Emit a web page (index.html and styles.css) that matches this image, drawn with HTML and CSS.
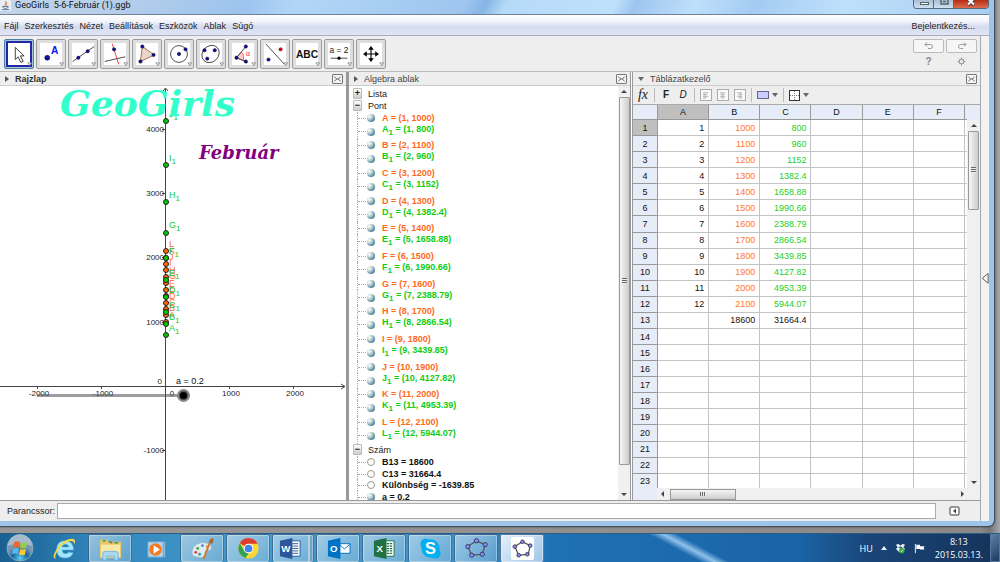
FILE: index.html
```html
<!DOCTYPE html>
<html lang="hu">
<head>
<meta charset="utf-8">
<title>GeoGirls 5-6-Február (1).ggb</title>
<link rel="stylesheet" href="styles.css">
</head>
<body>
<div class="desktop">
<div class="window">
  <header class="titlebar">
    <svg class="java" viewBox="0 0 12 12"><rect width="12" height="12" rx="1" fill="#e9eef5"/><path d="M6 1c2 2-2 3 0 5M8 3c-1 1-1 2-1 3" stroke="#e0662a" fill="none"/><path d="M3 7h6c0 3-6 3-6 0M2 10.500h8" stroke="#4a6c95" fill="none"/></svg>
    <span class="caption">GeoGirls&nbsp; 5-6-Február (1).ggb</span>
    <div class="winbtns">
      <button aria-label="Kis méret"><svg viewBox="0 0 20 9"><rect x="6.500" y="2.500" width="8" height="2" fill="#fff" stroke="#566"/></svg></button>
      <button aria-label="Előző méret"><svg viewBox="0 0 20 9"><path d="M7 -1v5h7v-5M9 1.500h3" stroke="#566" stroke-width="1.500" fill="none"/></svg></button>
      <button class="close" aria-label="Bezárás"><svg viewBox="0 0 20 9"><path d="M7 5l6-6M13 5L7-1" stroke="#533" stroke-width="3.500"/><path d="M7 4.500l6-6M13 4.500L7-1" stroke="#fff" stroke-width="2"/></svg></button>
    </div>
  </header>
  <nav class="menubar">
    <button>Fájl</button><button>Szerkesztés</button><button>Nézet</button><button>Beállítások</button><button>Eszközök</button><button>Ablak</button><button>Súgó</button>
    <button class="login">Bejelentkezés...</button>
  </nav>
  <div class="body">
    <main class="main">
      <div class="toolbar">
        <button class="tool active" aria-label="Mozgatás"><svg viewBox="0 0 30 30"><path d="M11 8v13l3-3 3 6 2.500-1-3-6h4z" fill="#fff" stroke="#333"/><path class="dd" d="M24.500 24.500h4l-2 3z"/></svg></button>
        <button class="tool" aria-label="Pont"><svg viewBox="0 0 30 30"><circle cx="11" cy="19" r="2.700" class="pt"/><text x="15" y="15" class="ia">A</text><path class="dd" d="M24.500 24.500h4l-2 3z"/></svg></button>
        <button class="tool" aria-label="Egyenes"><svg viewBox="0 0 30 30"><path d="M4 23L27 7" class="ln"/><circle cx="10" cy="19" r="1.800" class="pt"/><circle cx="20" cy="12" r="1.800" class="pt"/><path class="dd" d="M24.500 24.500h4l-2 3z"/></svg></button>
        <button class="tool" aria-label="Merőleges"><svg viewBox="0 0 30 30"><path d="M12 4l7 22" stroke="#f33"/><path d="M4 23l22-5" class="ln"/><circle cx="14" cy="10" r="1.800" class="pt"/><path class="dd" d="M24.500 24.500h4l-2 3z"/></svg></button>
        <button class="tool" aria-label="Sokszög"><svg viewBox="0 0 30 30"><path d="M10 7l13 9-15 7z" fill="#ead5c8" stroke="#a5674a"/><circle cx="10" cy="7" r="1.800" class="pt"/><circle cx="22" cy="16" r="1.800" class="pt"/><circle cx="8" cy="23" r="1.800" class="pt"/><path class="dd" d="M24.500 24.500h4l-2 3z"/></svg></button>
        <button class="tool" aria-label="Kör"><svg viewBox="0 0 30 30"><circle cx="15" cy="15" r="9" class="ln"/><circle cx="15" cy="15" r="1.800" class="pt"/><circle cx="22" cy="10" r="1.800" class="pt"/><path class="dd" d="M24.500 24.500h4l-2 3z"/></svg></button>
        <button class="tool" aria-label="Kúpszelet"><svg viewBox="0 0 30 30"><ellipse cx="14.500" cy="15" rx="10" ry="8.500" transform="rotate(-45 14.500 15)" class="ln"/><circle cx="8" cy="11" r="1.800" class="pt"/><circle cx="19" cy="11" r="1.800" class="pt"/><circle cx="11" cy="20" r="1.800" class="pt"/><path class="dd" d="M24.500 24.500h4l-2 3z"/></svg></button>
        <button class="tool" aria-label="Szög"><svg viewBox="0 0 30 30"><path d="M8 19l5-6c3 2 3 5 2 9z" fill="#fcc" stroke="#e55"/><path d="M18 7L8 19l12 5" class="ln"/><text x="18" y="17" class="ir">α</text><circle cx="18" cy="7" r="1.800" class="pt"/><circle cx="8" cy="19" r="1.800" class="pt"/><circle cx="18" cy="23" r="1.800" class="pt"/><path class="dd" d="M24.500 24.500h4l-2 3z"/></svg></button>
        <button class="tool" aria-label="Tükrözés"><svg viewBox="0 0 30 30"><path d="M5 4l20 22" class="ln"/><circle cx="8" cy="21" r="1.800" class="pt"/><circle cx="21" cy="10" r="1.800" fill="#d11" stroke="#400" stroke-width=".5"/><path class="dd" d="M24.500 24.500h4l-2 3z"/></svg></button>
        <button class="tool" aria-label="Szöveg"><svg viewBox="0 0 30 30"><text x="15" y="19" class="iabc">ABC</text><path class="dd" d="M24.500 24.500h4l-2 3z"/></svg></button>
        <button class="tool" aria-label="Csúszka"><svg viewBox="0 0 30 30"><text x="15" y="14" class="ieq">a = 2</text><path d="M6 19.500h18" class="ln"/><circle cx="15" cy="19.500" r="1.700" fill="#000"/><path class="dd" d="M24.500 24.500h4l-2 3z"/></svg></button>
        <button class="tool" aria-label="Rajzlap mozgatása"><svg viewBox="0 0 30 30"><path d="M15 9v12M9 15h12" stroke="#000" stroke-width="1.200"/><path fill="#000" d="M15 6.500l-3 4h6zM15 23.500l-3-4h6zM6.500 15l4-3v6zM23.500 15l-4-3v6z"/><path class="dd" d="M24.500 24.500h4l-2 3z"/></svg></button>
        <div class="history">
          <button class="undo" aria-label="Visszavonás"><svg viewBox="0 0 12 8"><path d="M4 .5L2 2.500l2 2M2 2.500h5.500q2 0 2 2t-2 2H5"/></svg></button>
          <button class="undo" aria-label="Újra"><svg viewBox="0 0 12 8"><path d="M8 .5l2 2-2 2M10 2.500H4.500q-2 0-2 2t2 2H7"/></svg></button>
          <button class="plain">?</button>
          <button class="plain" aria-label="Beállítások"><svg viewBox="0 0 10 10" class="gear"><circle cx="5" cy="5" r="2.500"/><path d="M5 .5v2M5 7.500v2M.5 5h2M7.500 5h2M2 2l1 1M7 7l1 1M8 2L7 3M3 7L2 8"/></svg></button>
        </div>
      </div>
      <div class="panels">
        <section class="panel graph">
          <h2 class="phead strong"><span class="tri"></span>Rajzlap<button class="px" aria-label="Bezárás"><svg viewBox="0 0 10 10"><path d="M1 2l3 3-3 3M9 2L6 5l3 3M4 5h2"/></svg></button></h2>
          <div class="canvas">
            <svg class="plot">
              <g class="axis">
                <path d="M0 300.500h345M165.500 3v420M341 298l4 2.500-4 2.500M163 5l2.500-3 2.500 3"/>
                <path d="M162 43.500h4M162 107.500h4M162 171.500h4M162 236.500h4M162 364.500h4M37.500 300v3M101.500 300v3M229.500 300v3M293.500 300v3"/>
              </g>
              <g class="num end"><text x="164" y="46">4000</text><text x="164" y="110">3000</text><text x="164" y="174">2000</text><text x="164" y="239">1000</text><text x="164" y="367">-1000</text><text x="162" y="298">0</text></g>
              <g class="num mid"><text x="39" y="310">-2000</text><text x="103" y="310">-1000</text><text x="172" y="310">0</text><text x="231" y="310">1000</text><text x="295" y="310">2000</text></g>
              <text x="176" y="298" class="lab">a = 0.2</text>
              <g class="orange">
                <circle cx="166" cy="236" r="2.500"/><circle cx="166" cy="229" r="2.500"/><circle cx="166" cy="223" r="2.500"/><circle cx="166" cy="217" r="2.500"/><circle cx="166" cy="210" r="2.500"/><circle cx="166" cy="204" r="2.500"/><circle cx="166" cy="197" r="2.500"/><circle cx="166" cy="191" r="2.500"/><circle cx="166" cy="184" r="2.500"/><circle cx="166" cy="178" r="2.500"/><circle cx="166" cy="172" r="2.500"/><circle cx="166" cy="165" r="2.500"/>
                <text x="169" y="232">A</text><text x="169" y="225">B</text><text x="169" y="219">C</text><text x="169" y="213">D</text><text x="169" y="206">E</text><text x="169" y="200">F</text><text x="169" y="193">G</text><text x="169" y="187">H</text><text x="169" y="180">I</text><text x="169" y="174">J</text><text x="169" y="168">K</text><text x="169" y="161">L</text>
              </g>
              <g class="green">
                <circle cx="166" cy="249" r="2.500"/><circle cx="166" cy="238" r="2.500"/><circle cx="166" cy="226" r="2.500"/><circle cx="166" cy="211" r="2.500"/><circle cx="166" cy="194" r="2.500"/><circle cx="166" cy="172" r="2.500"/><circle cx="166" cy="147" r="2.500"/><circle cx="166" cy="116" r="2.500"/><circle cx="166" cy="79" r="2.500"/><circle cx="166" cy="35" r="2.500"/>
                <text x="169" y="245">A<tspan dy="3">1</tspan></text><text x="169" y="234">B<tspan dy="3">1</tspan></text><text x="169" y="222">C<tspan dy="3">1</tspan></text><text x="169" y="207">D<tspan dy="3">1</tspan></text><text x="169" y="190">E<tspan dy="3">1</tspan></text><text x="169" y="168">F<tspan dy="3">1</tspan></text><text x="169" y="142">G<tspan dy="3">1</tspan></text><text x="169" y="112">H<tspan dy="3">1</tspan></text><text x="169" y="75">I<tspan dy="3">1</tspan></text><text x="169" y="31">J<tspan dy="3">1</tspan></text>
              </g>
              <text x="60" y="30" class="big">GeoGirls</text>
              <text x="199" y="73" class="feb">Február</text>
            </svg>
            <input class="slider" type="range" min="0" max="0.2" step="0.01" value="0.2" aria-label="a">
          </div>
        </section>
        <section class="panel algebra">
          <h2 class="phead"><span class="tri"></span>Algebra ablak<button class="px" aria-label="Bezárás"><svg viewBox="0 0 10 10"><path d="M1 2l3 3-3 3M9 2L6 5l3 3M4 5h2"/></svg></button></h2>
          <div class="scrollrow">
            <ul class="tree">
              <li class="cat"><button class="ex">+</button>Lista</li>
              <li class="cat"><button class="ex">−</button>Pont</li>
              <li class="o">A = (1, 1000)</li><li class="g">A<sub>1</sub> = (1, 800)</li>
              <li class="o">B = (2, 1100)</li><li class="g">B<sub>1</sub> = (2, 960)</li>
              <li class="o">C = (3, 1200)</li><li class="g">C<sub>1</sub> = (3, 1152)</li>
              <li class="o">D = (4, 1300)</li><li class="g">D<sub>1</sub> = (4, 1382.4)</li>
              <li class="o">E = (5, 1400)</li><li class="g">E<sub>1</sub> = (5, 1658.88)</li>
              <li class="o">F = (6, 1500)</li><li class="g">F<sub>1</sub> = (6, 1990.66)</li>
              <li class="o">G = (7, 1600)</li><li class="g">G<sub>1</sub> = (7, 2388.79)</li>
              <li class="o">H = (8, 1700)</li><li class="g">H<sub>1</sub> = (8, 2866.54)</li>
              <li class="o">I = (9, 1800)</li><li class="g">I<sub>1</sub> = (9, 3439.85)</li>
              <li class="o">J = (10, 1900)</li><li class="g">J<sub>1</sub> = (10, 4127.82)</li>
              <li class="o">K = (11, 2000)</li><li class="g">K<sub>1</sub> = (11, 4953.39)</li>
              <li class="o">L = (12, 2100)</li><li class="g end">L<sub>1</sub> = (12, 5944.07)</li>
              <li class="cat"><button class="ex">−</button>Szám</li>
              <li class="n hollow">B13 = 18600</li><li class="n hollow">C13 = 31664.4</li><li class="n hollow">Különbség = -1639.85</li><li class="n last">a = 0.2</li>
            </ul>
            <div class="vbar"><span class="up"></span><span class="thumb long"></span><span class="space"></span><span class="down"></span></div>
          </div>
        </section>
        <section class="panel sheet">
          <h2 class="phead"><span class="tri open"></span>Táblázatkezelő<button class="px" aria-label="Bezárás"><svg viewBox="0 0 10 10"><path d="M1 2l3 3-3 3M9 2L6 5l3 3M4 5h2"/></svg></button></h2>
          <div class="format">
            <button class="fx">fx</button><i class="sep"></i>
            <button class="fb">F</button><button class="fi">D</button><i class="sep"></i>
            <button class="al" aria-label="Balra"><svg viewBox="0 0 11 12"><path d="M2 3.500h6M2 5.500h4M2 7.500h6M2 9.500h4"/></svg></button>
            <button class="al" aria-label="Középre"><svg viewBox="0 0 11 12"><path d="M2 3.500h6M3 5.500h4M2 7.500h6M3 9.500h4"/></svg></button>
            <button class="al" aria-label="Jobbra"><svg viewBox="0 0 11 12"><path d="M2 3.500h6M4 5.500h4M2 7.500h6M4 9.500h4"/></svg></button><i class="sep"></i>
            <button class="drop" aria-label="Háttérszín"><span class="swatch"></span><span class="tri open"></span></button><i class="sep"></i>
            <button class="drop" aria-label="Szegély"><svg viewBox="0 0 11 11"><rect x=".5" y=".5" width="10" height="10" fill="#fff" stroke="#333"/><path d="M5.500 1v9M1 5.500h9" stroke="#777" stroke-dasharray="1 1"/></svg><span class="tri open"></span></button>
          </div>
          <div class="gridrow">
            <div class="tablebox">
            <table>
              <colgroup><col class="c0"><col><col><col><col><col><col><col class="cx"></colgroup>
              <tr class="hd"><th></th><th class="sel">A</th><th>B</th><th>C</th><th>D</th><th>E</th><th>F</th><th></th></tr>
              <tr><th class="sel">1</th><td>1</td><td>1000</td><td>800</td><td></td><td></td><td></td><td></td></tr>
              <tr><th>2</th><td>2</td><td>1100</td><td>960</td><td></td><td></td><td></td><td></td></tr>
              <tr><th>3</th><td>3</td><td>1200</td><td>1152</td><td></td><td></td><td></td><td></td></tr>
              <tr><th>4</th><td>4</td><td>1300</td><td>1382.4</td><td></td><td></td><td></td><td></td></tr>
              <tr><th>5</th><td>5</td><td>1400</td><td>1658.88</td><td></td><td></td><td></td><td></td></tr>
              <tr><th>6</th><td>6</td><td>1500</td><td>1990.66</td><td></td><td></td><td></td><td></td></tr>
              <tr><th>7</th><td>7</td><td>1600</td><td>2388.79</td><td></td><td></td><td></td><td></td></tr>
              <tr><th>8</th><td>8</td><td>1700</td><td>2866.54</td><td></td><td></td><td></td><td></td></tr>
              <tr><th>9</th><td>9</td><td>1800</td><td>3439.85</td><td></td><td></td><td></td><td></td></tr>
              <tr><th>10</th><td>10</td><td>1900</td><td>4127.82</td><td></td><td></td><td></td><td></td></tr>
              <tr><th>11</th><td>11</td><td>2000</td><td>4953.39</td><td></td><td></td><td></td><td></td></tr>
              <tr><th>12</th><td>12</td><td>2100</td><td>5944.07</td><td></td><td></td><td></td><td></td></tr>
              <tr class="sum"><th>13</th><td></td><td>18600</td><td>31664.4</td><td></td><td></td><td></td><td></td></tr>
              <tr><th>14</th><td></td><td></td><td></td><td></td><td></td><td></td><td></td></tr>
              <tr><th>15</th><td></td><td></td><td></td><td></td><td></td><td></td><td></td></tr>
              <tr><th>16</th><td></td><td></td><td></td><td></td><td></td><td></td><td></td></tr>
              <tr><th>17</th><td></td><td></td><td></td><td></td><td></td><td></td><td></td></tr>
              <tr><th>18</th><td></td><td></td><td></td><td></td><td></td><td></td><td></td></tr>
              <tr><th>19</th><td></td><td></td><td></td><td></td><td></td><td></td><td></td></tr>
              <tr><th>20</th><td></td><td></td><td></td><td></td><td></td><td></td><td></td></tr>
              <tr><th>21</th><td></td><td></td><td></td><td></td><td></td><td></td><td></td></tr>
              <tr><th>22</th><td></td><td></td><td></td><td></td><td></td><td></td><td></td></tr>
              <tr><th>23</th><td></td><td></td><td></td><td></td><td></td><td></td><td></td></tr>
            </table>
            </div>
            <div class="sidecol"><div class="corner"></div><div class="vbar"><span class="up"></span><span class="thumb short"></span><span class="space"></span><span class="down"></span></div></div>
          </div>
          <div class="hbar"><span class="left"></span><span class="hthumb"></span><span class="space"></span><span class="right"></span></div>
        </section>
      </div>
      <div class="inputbar">
        <label for="cmd">Parancssor:</label><input id="cmd" type="text">
        <button class="help" aria-label="Súgó"><svg viewBox="0 0 11 10"><rect x="1" y="1" width="9" height="8" rx="1.500" fill="#fff" stroke="#777" stroke-width="1.500"/><path d="M7 2.500v5L4 5z" fill="#444"/></svg></button>
      </div>
    </main>
    <aside class="strip"><svg viewBox="0 0 9 12"><path d="M8 .5v11L1.500 6z" fill="#fff" stroke="#444"/></svg></aside>
  </div>
</div>
</div>
<footer class="taskbar">
  <button class="task orb" aria-label="Start"><svg viewBox="0 0 28 28"><defs><radialGradient id="ob" cy=".9"><stop offset="0" stop-color="#5ad0ee"/><stop offset=".6" stop-color="#1b669f"/><stop offset="1" stop-color="#7698b3"/></radialGradient></defs><circle cx="14" cy="14" r="13" fill="url(#ob)" stroke="#8ab"/><path d="M2 12a12 12 0 0 1 24 0q-12-5-24 0" fill="#c4d2dd" opacity=".6"/><path d="M8 8.500q3-2 6-.5l-1 5.500q-3-1-6 .5z" fill="#f0652a"/><path d="M15 8.500q3 1 6-.5l-1 6q-3 1-6 0z" fill="#9ccc3c"/><path d="M7 15q3-1.500 6-.5l-1 5.500q-3-1-6 .5z" fill="#5bb8f0"/><path d="M14 15q3 1 6 0l-1 5.500q-3 1.500-6 0z" fill="#fdc82f"/></svg></button>
  <button class="task bare" aria-label="Internet Explorer"><svg viewBox="0 0 26 26"><path d="M22 17.500q-2 5.500-8.500 5.500-8.500 0-8.500-9t8.500-9 9 9.500H10.500q.3 4 3.500 4 2.200 0 3-1.500zM10.500 11.500h7q-.3-3-3.500-3t-3.500 3" fill="#a5e4fb" stroke="#4abbe8" stroke-width=".6"/><path d="M4 24q-4-1-1.500-6Q7 7 17 3.500q7-2 7 2 0 1-1 3 0-4-5-3Q8 9 4.500 18q-2 4-.5 6" fill="#f8d640"/></svg></button>
  <button class="task" aria-label="Intéző"><svg viewBox="0 0 26 26"><path d="M2 5q0-1 1-1h7l1 2h13v17H2z" fill="#e5c768"/><path d="M3 9h20v13H3z" fill="#f9e9a6"/><path d="M5 5h3M11 6h3M17 7h4" stroke="#3aa25a" stroke-width="1.500"/><path d="M13 7h2" stroke="#d44" stroke-width="1.500"/><path d="M5 25v-7q0-2 2-2h12q2 0 2 2v7h-4v-4H9v4z" fill="#abd9f2" stroke="#72b5dd"/></svg></button>
  <button class="task bare" aria-label="Médialejátszó"><svg viewBox="0 0 26 26"><path d="M8 6h14v16H8z" fill="#8ebde0"/><path d="M4 6h16v16H4z" fill="#b0d5ec" stroke="#669fce"/><circle cx="12" cy="14" r="6.500" fill="#f47920"/><path d="M10 9.500v9l6.500-4.500z" fill="#fff"/></svg></button>
  <button class="task" aria-label="Paint"><svg viewBox="0 0 26 26"><path d="M2 17C2 10 9 6 16 7c7 1 8 7 4 8-3 0-5 1-4 3 1 4-4 5-8 4-4 0-6-2-6-5" fill="#dfeaf2" stroke="#9bb6c8"/><circle cx="6" cy="17" r="1.500" fill="#d44"/><circle cx="8" cy="13" r="1.500" fill="#4a4"/><circle cx="13" cy="10" r="1.500" fill="#48d"/><circle cx="10" cy="19" r="1.500" fill="#2a9"/><circle cx="18" cy="11" r="1.500" fill="#e92"/><path d="M14 24l7-18" stroke="#c87a34" stroke-width="2"/><path d="M20 7q-1-4 4-5 1 4-1 6z" fill="#a8672f"/></svg></button>
  <button class="task" aria-label="Chrome"><svg viewBox="0 0 26 26"><circle cx="13" cy="13" r="10.500" fill="#fdd835"/><path d="M13 13L4 7.500A10.500 10.500 0 0 1 22.500 8H13z" fill="#e13c2f"/><path d="M4 7.500L9 16l4 2-3 5A10.500 10.500 0 0 1 4 7.500" fill="#31a350"/><circle cx="13" cy="13" r="5" fill="#fff"/><circle cx="13" cy="13" r="4" fill="#3f83ec"/></svg></button>
  <button class="task word" aria-label="Word"><svg viewBox="0 0 26 26"><path d="M12 5h11v16H12z" fill="#fff" stroke="#2b579a"/><path d="M15 8h6M15 10.500h6M15 13h6M15 15.500h6M15 18h6" stroke="#2b579a"/><path d="M2 5l13-3v22L2 21z" fill="#2b579a"/><text x="8" y="17" class="app">W</text></svg></button>
  <button class="task" aria-label="Outlook"><svg viewBox="0 0 26 26"><path d="M13 8h12v10H13z" fill="#fff" stroke="#0072c6"/><path d="M14 8.500l5 5 6-5" stroke="#0072c6" fill="none"/><path d="M2 5l13-3v22L2 21z" fill="#0072c6"/><text x="8" y="17" class="app">O</text></svg></button>
  <button class="task" aria-label="Excel"><svg viewBox="0 0 26 26"><path d="M12 5h11v16H12z" fill="#fff" stroke="#207245"/><path d="M15 8h6M15 10.500h6M15 13h6M15 15.500h6M15 18h6" stroke="#207245" stroke-width="1.300" stroke-dasharray="3 .7"/><path d="M2 5l13-3v22L2 21z" fill="#207245"/><text x="8" y="17" class="app">X</text></svg></button>
  <button class="task" aria-label="Skype"><svg viewBox="0 0 26 26"><circle cx="13" cy="13" r="9.500" fill="#00aff0"/><circle cx="8" cy="8" r="5.500" fill="#00aff0"/><circle cx="18" cy="18" r="5.500" fill="#00aff0"/><text x="13" y="19" class="sk">S</text></svg></button>
  <button class="task" aria-label="GeoGebra"><svg viewBox="0 0 26 26"><path d="M13 5l9 4-3 10-11 1L4 11z" class="pent"/><g class="node"><circle cx="13" cy="5" r="2.200"/><circle cx="22" cy="9" r="2.200"/><circle cx="19" cy="19" r="2.200"/><circle cx="8" cy="20" r="2.200"/><circle cx="4" cy="11" r="2.200"/></g></svg></button>
  <button class="task current" aria-label="GeoGebra"><svg viewBox="0 0 26 26"><rect x="1" y="1" width="24" height="24" rx="2" fill="#fff"/><path d="M13 6l8 4-2 9-10 1-4-9z" class="pent"/><g class="node"><circle cx="13" cy="6" r="1.900"/><circle cx="21" cy="10" r="1.900"/><circle cx="18" cy="19" r="1.900"/><circle cx="9" cy="20" r="1.900"/><circle cx="5" cy="11" r="1.900"/></g></svg></button>
  <div class="tray">
    <span>HU</span>
    <svg class="i6" viewBox="0 0 6 4"><path d="M0 4h6L3 0z" fill="#e5edf5"/></svg>
    <svg class="i12" viewBox="0 0 12 12"><path d="M1 2l3-1 2 2 2-2 3 1-2 2.500 2 2L8 8.500 6 7 4 8.500 1 6.500l2-2z" fill="#f5fafd"/><path d="M6 3.500L8.500 5 6 6.500 3.500 5z" fill="#3a6a96"/><path d="M2 8l4 3 1-3z" fill="#f5fafd"/><circle cx="7.500" cy="8.500" r="3" fill="#2fa83d"/><path d="M6 8.500l1 1 2-2" stroke="#fff" fill="none"/></svg>
    <svg class="i12" viewBox="0 0 12 12"><path d="M1.500 1v10" stroke="#fff"/><path d="M2.500 2h4v1.500h5L10.500 5l1 2h-5V6.500h-4z" fill="#fff"/></svg>
    <div class="clock"><span>8:13</span><span>2015.03.13.</span></div>
  </div>
  <button class="peek" aria-label="Asztal megjelenítése"></button>
</footer>
</body>
</html>
```
FILE: styles.css
```css
*, *::before, *::after { box-sizing: border-box; }
body { margin: 0; height: 100vh; display: flex; flex-direction: column; overflow: hidden; font: 9px/12px "Liberation Sans", Arial, sans-serif; color: #222; background: #8d8d8d; }
button { font: inherit; color: inherit; background: none; border: 0; padding: 0; margin: 0; }
svg { display: block; fill: none; }
h2 { margin: 0; }

.desktop { flex: 1; min-height: 0; display: flex; padding: 0 6px 7px 0; background: linear-gradient(90deg, #999 0%, #8d8888 98%, #777 99%, #a5a8ae 100%); }
.window { flex: 1; min-width: 0; display: flex; flex-direction: column; border: solid #9fc4ea; border-width: 0 5px 5px 0; border-radius: 0 0 6px 0; box-shadow: 0 0 2px 1px #303a45; background: #eee; }
.titlebar { height: 15px; display: flex; align-items: flex-start; gap: 4px; border-bottom: 1px solid #6f8295; background: linear-gradient(118deg, #c3d5e8 0, #b4cdea 13%, #9cc4ee 25%, #b2d6f7 30%, #9dc5ee 47%, #86b5e5 49%, #b5daf9 51%, #bfe0fb 62%, #9dc5ee 64%, #bfe0fb 70%, #a3cbf2 76%, #bfe0fb 85%, #a7cdf0 100%); }
.java { width: 11px; height: 11px; }
.caption { flex: 1; font: 9px/11px Roboto, sans-serif; color: #111; }
.winbtns { display: flex; height: 9px; border: 1px solid #56697d; border-top: 0; border-radius: 0 0 4px 4px; overflow: hidden; }
.winbtns button { width: 20px; border-right: 1px solid #56697d; background: linear-gradient(#a9bfd6, #cfe0f1); }
.winbtns .close { width: 34px; border: 0; background: linear-gradient(#b82b12, #dc6b50); }
.winbtns svg { height: 9px; margin: 0 auto; }
.menubar { height: 21px; display: flex; align-items: center; gap: 6px; padding: 2px 14px 0 4px; border-bottom: 1px solid #aab; background: linear-gradient(#fff 0, #f4f6fc 30%, #d4daee 60%, #e2e6f6 100%); }
.menubar .login { margin-left: auto; }
.body { flex: 1; min-height: 0; display: flex; }
.main { flex: 1; min-width: 0; display: flex; flex-direction: column; border-right: 1px solid #aaa; }
.strip { width: 8px; display: flex; align-items: center; background: #f2f2f2; }
.strip svg { width: 8px; }

.toolbar { height: 35px; display: flex; align-items: center; gap: 2px; padding: 0 2px 0 4px; }
.tool { width: 30px; height: 30px; border: 1px solid #999; border-radius: 2px; background: #fff; box-shadow: inset 0 0 0 3px #dedede; }
.tool.active { border: 1px solid #4a7fa5; box-shadow: inset 0 0 0 1px #a8c8dc, inset 0 0 0 3px #2525a8; }
.tool svg { width: 28px; height: 28px; }
.pt { fill: #1010b0; stroke: #000; stroke-width: .5; }
.ln { stroke: #444; }
.dd { fill: #fff; stroke: #777; stroke-width: .8; }
.tool text { fill: #111; }
.tool .ia { font-size: 11px; font-weight: bold; fill: #11f; }
.tool .ir { font-size: 8px; fill: #e33; }
.iabc { font-size: 11px; font-weight: bold; text-anchor: middle; }
.ieq { font-size: 9px; text-anchor: middle; }
.history { margin-left: auto; display: grid; grid-template-columns: 31px 31px; gap: 2px; justify-items: stretch; padding-right: 1px; }
.undo { height: 14px; border: 1px solid #bbb; border-radius: 2px; background: #f6f6f6; }
.undo svg { width: 12px; height: 8px; margin: 0 auto; stroke: #999; }
.plain { height: 14px; font-size: 10px; font-weight: bold; color: #888; }
.gear { width: 9px; margin: 0 auto; stroke: #888; }

.panels { flex: 1; min-height: 0; display: grid; grid-template-columns: 346fr 284fr 350fr; border-top: 1px solid #bbb; border-bottom: 1px solid #999; }
.panel { min-width: 0; min-height: 0; display: flex; flex-direction: column; background: #fff; overflow: hidden; }
.algebra { border-left: 3px solid #999; }
.sheet { border-left: 3px double #999; }
.phead { height: 14px; display: flex; align-items: center; gap: 6px; padding: 0 3px 0 5px; font-size: 9px; line-height: 12px; font-weight: normal; color: #444; background: #eee; border-bottom: 1px solid #ccc; flex: none; }
.phead.strong { font-weight: bold; color: #333; }
.tri { border: solid transparent; border-width: 3px 0 3px 4px; border-left-color: #555; }
.tri.open { border-width: 4px 3px 0 3px; border-color: #666 transparent transparent; }
.px { width: 11px; height: 10px; margin-left: auto; border: 1px solid #777; border-radius: 1px; background: #f5f5f5; }
.px svg { width: 9px; height: 8px; stroke: #444; }

.canvas { flex: 1; min-height: 0; position: relative; }
.plot { width: 100%; height: 100%; }
.axis { stroke: #444; }
.num { font-size: 8px; fill: #222; }
.end { text-anchor: end; }
.mid { text-anchor: middle; }
.lab { font-size: 9px; fill: #111; }
.orange circle { fill: #f60; stroke: #222; }
.green circle { fill: #0c0; stroke: #222; }
.orange text { fill: #ff6a1a; font-size: 9px; }
.green text { fill: #1c3; font-size: 9px; }
.green tspan { font-size: 8px; }
.big { font: italic bold 36px "DejaVu Serif", serif; fill: #3fc; }
.feb { font: italic bold 18px "DejaVu Serif", serif; fill: #800080; }
.slider { position: absolute; left: 37px; top: 303px; width: 153px; height: 13px; margin: 0; appearance: none; background: linear-gradient(transparent 5px, rgba(90,90,90,.6) 5px, rgba(90,90,90,.6) 8px, transparent 8px); }
.slider::-webkit-slider-thumb { appearance: none; width: 13px; height: 13px; border: 2px solid #888; border-radius: 50%; background: #000; box-shadow: inset 0 0 0 1px #555; }

.scrollrow { flex: 1; min-height: 0; display: flex; }
.tree { flex: 1; min-width: 0; list-style: none; margin: 0; padding: 2px 0 0 4px; display: flex; flex-direction: column; overflow: hidden; }
.tree li { flex: 12 1 0; min-height: 0; display: flex; align-items: flex-start; white-space: pre; font-weight: bold; line-height: 12px; margin-left: 4px; padding-left: 24px; border-left: 1px dotted #aaa; position: relative; }
.tree li.cat { border: 0; margin: 0; padding: 0; gap: 6px; font-weight: normal; color: #222; }
.tree .g { flex-grow: 16; line-height: 10px; color: #1c1; }
.tree .o { color: #ff6a1a; }
.tree .last { flex-grow: 9; }
.tree .n { color: #111; }
.tree sub { font-size: 8px; line-height: 10px; padding-top: 4px; vertical-align: baseline; }
.tree li:not(.cat)::before { content: ""; position: absolute; left: 0; top: 6px; width: 8px; border-top: 1px dotted #aaa; }
.tree li:not(.cat)::after { content: ""; position: absolute; left: 9px; top: 2px; width: 8px; height: 8px; border-radius: 50%; background: radial-gradient(circle at 30% 30%, #fff 0, #b9cfd0 35%, #3f7590 80%); }
.tree li.g::before { top: 7px; }
.tree li.g::after { top: 4px; }
.tree li.hollow::after { background: #fff; border: 1px solid #998; }
.ex { width: 9px; height: 11px; border: 1px solid #bbb; border-radius: 1px; background: linear-gradient(#fff, #ccc); font-weight: bold; line-height: 9px; }

.vbar { width: 12px; display: flex; flex-direction: column; align-items: center; padding: 4px 0; background: #f0f0f0; }
.up, .down, .left, .right { width: 0; height: 0; border: 3px solid transparent; flex: none; }
.up { border-top-width: 0; border-bottom-color: #444; }
.down { border-bottom-width: 0; border-top-color: #444; }
.left { border-left-width: 0; border-right-color: #444; }
.right { border-right-width: 0; border-left-color: #444; }
.thumb { width: 11px; margin-top: 4px; border: 1px solid #999; border-radius: 1px; background: repeating-linear-gradient(#666 0 1px, #eee 1px 2px) center / 5px 6px no-repeat, linear-gradient(90deg, #f6f6f6, #ccc); }
.long { flex: 93 1 0; }
.long + .space { flex: 7 1 0; }
.short { flex: 22 1 0; }
.short + .space { flex: 78 1 0; }

.format { height: 19px; flex: none; display: flex; align-items: center; gap: 5px; padding: 0 4px; background: #eee; border-bottom: 1px solid #aaa; }
.sep { width: 1px; height: 14px; background: #bbb; }
.format button { min-width: 12px; }
.fx { font: italic 14px/16px "Liberation Serif", serif; }
.format .fb { font-weight: bold; font-size: 10px; }
.format .fi { font-style: italic; font-size: 10px; }
.al { width: 11px; height: 12px; border: 1px solid #aaa; background: #fafafa; }
.al svg { width: 10px; height: 10px; stroke: #999; }
.drop { display: flex; align-items: center; gap: 3px; }
.drop svg { width: 11px; height: 11px; }
.swatch { width: 12px; height: 8px; border: 1px solid #668; background: #ccf; }
.gridrow { flex: 1; min-height: 0; display: flex; }
.tablebox { flex: 1; min-width: 0; overflow: hidden; }
table { width: 100%; height: calc(100% + 2px); table-layout: fixed; border-collapse: separate; border-spacing: 0; }
col.c0 { width: 25px; }
col.cx { width: 2px; }
th, td { padding: 0; line-height: 12px; border: solid #c4c4c4; border-width: 0 1px 1px 0; overflow: hidden; }
th { font-weight: normal; color: #111; background: #e6edf8; border-color: #999; }
.hd th { height: 15px; line-height: 14px; }
th.sel { background: #bfbfbf; }
td { text-align: right; padding-right: 4px; color: #111; }
td:nth-child(3) { color: #ff7633; }
td:nth-child(4) { color: #1fd01f; }
.sum td:nth-child(n) { color: #111; }
th:last-child, td:last-child { border-right: 0; padding: 0; }
.sidecol { width: 13px; display: flex; flex-direction: column; }
.sidecol .vbar { flex: 1; width: 13px; }
.corner { height: 15px; background: #e6edf8; }
.hbar { height: 12px; flex: none; display: flex; align-items: center; padding: 0 16px 0 4px; margin-left: 24px; background: #f0f0f0; box-shadow: -24px 0 #e6edf8; }
.hthumb { flex: 22 1 0; height: 11px; margin-left: 6px; border: 1px solid #999; background: repeating-linear-gradient(90deg, #666 0 1px, #eee 1px 2px) center / 6px 4px no-repeat, linear-gradient(#f6f6f6, #ccc); }
.hbar .space { flex: 78 1 0; }

.inputbar { height: 20px; display: flex; align-items: center; padding: 0 20px 0 7px; gap: 2px; background: #eee; }
.inputbar input { flex: 1; min-width: 0; height: 16px; border: 1px solid #aaa; padding: 0 3px; font: inherit; background: #fff; }
.help { margin-left: 11px; }
.help svg { width: 11px; height: 10px; }

.taskbar { position: relative; height: 29px; flex: none; display: flex; gap: 2px; border-top: 1px solid #2b5c87; background: linear-gradient(28deg, transparent 40%, rgba(170,215,250,.8) 50%, transparent 60%) 645px 0 / 90px 29px no-repeat, linear-gradient(90deg, #1a5f92 0, #3187bd 10%, #469acb 25%, #3d94cb 45%, #1f72b5 55%, #1a63a6 80%, #1a4577 87%, #15335a 100%); }
.task { width: 44px; border: 1px solid rgba(20,60,100,.6); border-bottom: 0; border-radius: 2px; background: linear-gradient(135deg, rgba(255,255,255,.5), rgba(255,255,255,.2)); box-shadow: inset 0 0 0 1px rgba(255,255,255,.35); }
.task svg { width: 25px; height: 25px; margin: 0 auto; }
.task.orb, .task.bare { border: 0; background: none; box-shadow: none; }
.task.orb { width: 40px; }
.task.orb svg { width: 28px; height: 28px; }
.task.word { width: 42px; box-shadow: inset 0 0 0 1px rgba(255,255,255,.35), inset -3px 0 0 rgba(40,90,140,.4), inset -5px 0 0 rgba(255,255,255,.4); }
.task.word svg { margin-left: 5px; }
.task.current { background: linear-gradient(135deg, #e4f0fa, #9ec5e6); }
.app { font: bold 10px "Liberation Sans", sans-serif; fill: #fff; text-anchor: middle; }
.sk { font: bold 17px "Liberation Sans", sans-serif; fill: #fff; text-anchor: middle; }
.pent { stroke: #555; stroke-width: 1.3; }
.node { fill: #8a8aff; stroke: #223; stroke-width: .8; }
.tray { margin-left: auto; display: flex; align-items: center; gap: 8px; color: #fff; font: 9px/13px "Open Sans", sans-serif; }
.i6 { width: 6px; height: 4px; }
.i12 { width: 11px; height: 11px; }
.i12 + .clock { margin-left: 2px; }
.clock { display: flex; flex-direction: column; align-items: center; }
.peek { width: 10px; margin-left: 5px; border: 1px solid #56759a; background: linear-gradient(135deg, #5c7fa5, #1c3b63); }
```
